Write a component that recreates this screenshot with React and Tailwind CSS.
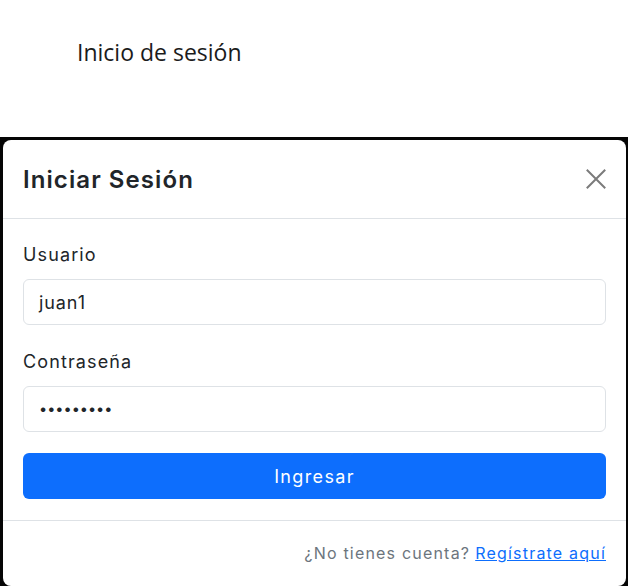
import React from 'react';

const FONT = { fontFamily: 'Inter, "Noto Sans", sans-serif' };

export default function App() {
  return (
    <div className="h-[586px] overflow-hidden bg-white flex flex-col">
      {/* Page header behind the modal */}
      <div className="h-[137px] shrink-0 pl-[77px] pt-[36px]">
        <h1 className="text-[23px] leading-[32px] text-[#1b1b1b] font-['Open_Sans',sans-serif]">Inicio de sesión</h1>
      </div>

      {/* Backdrop */}
      <div className="flex-1 bg-[#050505] pt-[3px] pl-[3px] pr-[2px]">
        <div className="bg-white rounded-lg h-full flex flex-col tracking-[0.07em]" style={FONT}>
          {/* Header */}
          <div className="h-[79px] shrink-0 flex items-center justify-between pl-[20px] pr-[20px] border-b border-[#dee2e6]">
            <h5 className="text-[24px] font-semibold tracking-[0.045em] text-[#212529] pt-[1px]">Iniciar Sesión</h5>
            <button className="w-[20px] h-[20px] flex items-center justify-center">
              <svg width="20" height="20" viewBox="0 0 20 20" fill="none" stroke="#7b7b7b" strokeWidth="2" strokeLinecap="square">
                <path d="M1.5 1.5L18.5 18.5M18.5 1.5L1.5 18.5" />
              </svg>
            </button>
          </div>

          {/* Body */}
          <div className="px-[20px] pt-[22px] pb-[21px] border-b border-[#dee2e6]">
            <label className="block text-[18px] leading-[27px] text-[#212529] mb-[11px]">Usuario</label>
            <div className="h-[46px] border border-[#dee2e6] rounded-md flex items-center px-[15px] text-[18px] tracking-[0.05em] text-[#212529]">
              juan1
            </div>
            <label className="block text-[18px] leading-[27px] text-[#212529] mt-[23px] mb-[11px]">Contraseña</label>
            <div className="h-[46px] border border-[#dee2e6] rounded-md flex items-center px-[15px] text-[14.5px] tracking-[0] text-[#212529]">
              •••••••••
            </div>
            <button className="mt-[21px] w-full h-[46px] rounded-md bg-[#0d6efd] text-white text-[18px] tracking-[0.075em]">
              Ingresar
            </button>
          </div>

          {/* Footer */}
          <div className="flex-1 flex items-center justify-end pr-[20px] pb-[1px] text-[16px] tracking-[0.075em]">
            <span className="text-[#6c757d]">¿No tienes cuenta?</span>
            <a href="#" className="ml-[5px] text-[#0d6efd] underline">Regístrate aquí</a>
          </div>
        </div>
      </div>
    </div>
  );
}
